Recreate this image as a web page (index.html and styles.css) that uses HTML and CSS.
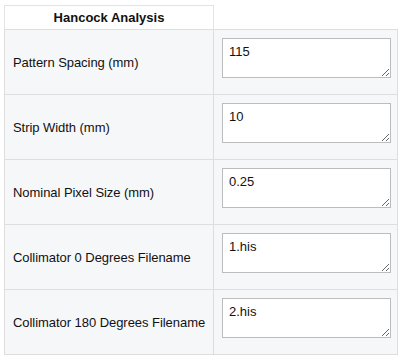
FILE: index.html
```html
<!DOCTYPE html>
<html lang="en">
<head>
    <meta charset="UTF-8">
    <title>Hancock Analysis</title>
    <link rel="stylesheet" href="styles.css">
</head>
<body>
    <table class="params">
        <thead>
            <tr>
                <th>Hancock Analysis</th>
                <th class="blank"></th>
            </tr>
        </thead>
        <tbody>
            <tr>
                <td class="label">Pattern Spacing (mm)</td>
                <td class="field"><textarea>115</textarea></td>
            </tr>
            <tr>
                <td class="label">Strip Width (mm)</td>
                <td class="field"><textarea>10</textarea></td>
            </tr>
            <tr>
                <td class="label">Nominal Pixel Size (mm)</td>
                <td class="field"><textarea>0.25</textarea></td>
            </tr>
            <tr>
                <td class="label">Collimator 0 Degrees Filename</td>
                <td class="field"><textarea>1.his</textarea></td>
            </tr>
            <tr>
                <td class="label">Collimator 180 Degrees Filename</td>
                <td class="field"><textarea>2.his</textarea></td>
            </tr>
        </tbody>
    </table>
</body>
</html>
```

FILE: styles.css
```css
* {
    box-sizing: border-box;
}

body {
    margin: 5px 4px;
    font-family: "Liberation Sans", Arial, sans-serif;
    font-size: 13px;
    color: #111;
    background: #fff;
}

.params {
    border-collapse: collapse;
    table-layout: fixed;
    width: 394px;
}

.params th {
    font-weight: bold;
    text-align: center;
    padding: 4px 8px;
    height: 24px;
    width: 209px;
    border: 1px solid #e3e3e3;
    border-bottom: none;
}

.params th.blank {
    border: none;
    width: auto;
}

.params td {
    background: #f6f7f9;
    border: 1px solid #dedede;
    padding: 0 7px 0 8px;
    height: 65px;
}

.label {
    white-space: nowrap;
    letter-spacing: -0.05px;
}

.field textarea {
    display: block;
    width: 169px;
    height: 40px;
    padding: 5px 6px;
    border: 1px solid #bcbcbc;
    border-radius: 0;
    font-family: "Liberation Sans", Arial, sans-serif;
    font-size: 13px;
    color: #111;
    background: #fff;
    margin: 0 0 9px;
}
```
